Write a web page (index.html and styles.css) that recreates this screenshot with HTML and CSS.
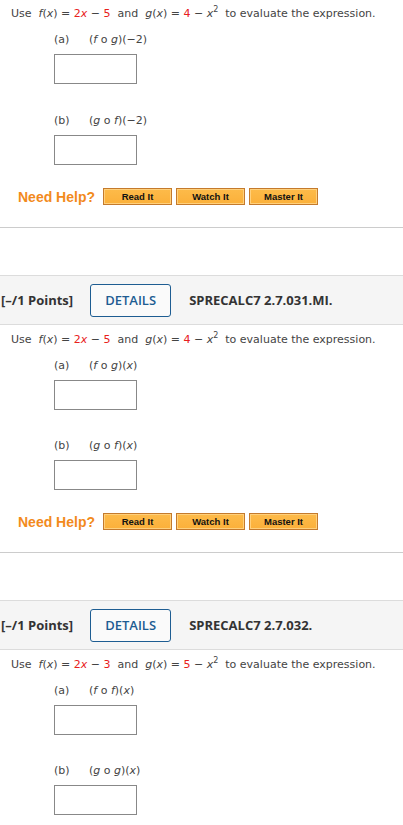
FILE: index.html
```html
<!DOCTYPE html>
<html>
<head>
<meta charset="utf-8">
<link rel="stylesheet" href="styles.css">
</head>
<body>
<div class="question">
  <div class="qbody">
    <p class="stem">Use&nbsp; <i>f</i>(<i>x</i>) = <span class="r">2</span><i class="r">x</i> − <span class="r">5</span>&nbsp; and&nbsp; <i>g</i>(<i>x</i>) = <span class="r">4</span> − <i>x</i><sup>2</sup>&nbsp; to evaluate the expression.</p>
    <div class="part">
      <div class="label"><span class="pl">(a)</span><span>(<i>f</i> o <i>g</i>)(−2)</span></div>
      <div class="box"></div>
    </div>
    <div class="part">
      <div class="label"><span class="pl">(b)</span><span>(<i>g</i> o <i>f</i>)(−2)</span></div>
      <div class="box"></div>
    </div>
    <div class="help">
      <span class="need">Need Help?</span>
      <span class="btn">Read It</span>
      <span class="btn">Watch It</span>
      <span class="btn">Master It</span>
    </div>
  </div>
</div>
<div class="sep"></div>

<div class="question">
  <div class="qhead">
    <span class="pts">[–/1 Points]</span>
    <span class="details">DETAILS</span>
    <span class="code">SPRECALC7 2.7.031.MI.</span>
  </div>
  <div class="qbody">
    <p class="stem">Use&nbsp; <i>f</i>(<i>x</i>) = <span class="r">2</span><i class="r">x</i> − <span class="r">5</span>&nbsp; and&nbsp; <i>g</i>(<i>x</i>) = <span class="r">4</span> − <i>x</i><sup>2</sup>&nbsp; to evaluate the expression.</p>
    <div class="part">
      <div class="label"><span class="pl">(a)</span><span>(<i>f</i> o <i>g</i>)(<i>x</i>)</span></div>
      <div class="box"></div>
    </div>
    <div class="part">
      <div class="label"><span class="pl">(b)</span><span>(<i>g</i> o <i>f</i>)(<i>x</i>)</span></div>
      <div class="box"></div>
    </div>
    <div class="help">
      <span class="need">Need Help?</span>
      <span class="btn">Read It</span>
      <span class="btn">Watch It</span>
      <span class="btn">Master It</span>
    </div>
  </div>
</div>
<div class="sep"></div>

<div class="question">
  <div class="qhead">
    <span class="pts">[–/1 Points]</span>
    <span class="details">DETAILS</span>
    <span class="code">SPRECALC7 2.7.032.</span>
  </div>
  <div class="qbody">
    <p class="stem">Use&nbsp; <i>f</i>(<i>x</i>) = <span class="r">2</span><i class="r">x</i> − <span class="r">3</span>&nbsp; and&nbsp; <i>g</i>(<i>x</i>) = <span class="r">5</span> − <i>x</i><sup>2</sup>&nbsp; to evaluate the expression.</p>
    <div class="part">
      <div class="label"><span class="pl">(a)</span><span>(<i>f</i> o <i>f</i>)(<i>x</i>)</span></div>
      <div class="box"></div>
    </div>
    <div class="part">
      <div class="label"><span class="pl">(b)</span><span>(<i>g</i> o <i>g</i>)(<i>x</i>)</span></div>
      <div class="box"></div>
    </div>
  </div>
</div>
</body>
</html>
```
FILE: styles.css
```css
html, body {
  margin: 0;
  padding: 0;
  background: #fff;
}
body {
  font-family: "DejaVu Sans", Verdana, sans-serif;
  font-size: 11px;
  color: #444;
  overflow: hidden;
}
.qbody {
  padding: 7px 0 0 11px;
}
.qhead + .qbody {
  padding-top: 8px;
}
.stem {
  margin: 0;
  line-height: 14px;
  white-space: nowrap;
}
.stem sup {
  font-size: 8px;
  line-height: 0;
  vertical-align: 5px;
}
.r {
  color: #e8201c;
}
i {
  font-style: italic;
}
.part {
  margin-left: 43px;
  padding-top: 12px;
}
.part + .part {
  padding-top: 30px;
}
.qhead + .qbody .part + .part {
  padding-top: 29px;
}
.label {
  display: flex;
  line-height: 14px;
  color: #444;
}
.pl {
  width: 35px;
}
.box {
  margin-top: 7px;
  width: 83px;
  height: 30px;
  box-sizing: border-box;
  border: 1px solid #888;
  background: #fff;
}
.help {
  display: flex;
  align-items: center;
  margin: 23px 0 0 7px;
  height: 17px;
}
.need {
  font-family: "Liberation Sans", Arial, sans-serif;
  font-weight: bold;
  font-size: 14px;
  color: #f28a1c;
  margin-right: 8px;
}
.btn {
  box-sizing: border-box;
  width: 69px;
  height: 17px;
  margin-right: 4px;
  display: flex;
  align-items: center;
  justify-content: center;
  font-family: "Liberation Sans", Arial, sans-serif;
  font-weight: bold;
  font-size: 9.5px;
  color: #111;
  border: 1px solid #c47a2c;
  background: linear-gradient(#fdbb4a, #fbb03a);
  box-shadow: inset 0 0 0 1px #ffd07c;
}
.sep {
  margin-top: 22px;
  height: 1px;
  background: #cccccc;
  margin-bottom: 47px;
}
.qhead {
  box-sizing: border-box;
  height: 50px;
  display: flex;
  align-items: center;
  background: #f5f5f5;
  border-top: 1px solid #dcdcdc;
  border-bottom: 1px solid #dcdcdc;
  font-family: "Open Sans", sans-serif;
  font-size: 13px;
  padding-left: 1px;
}
.pts {
  font-weight: bold;
  color: #333;
}
.details {
  box-sizing: border-box;
  margin-left: 17px;
  width: 81px;
  height: 33px;
  border: 1px solid #1e5d92;
  border-radius: 3px;
  display: flex;
  align-items: center;
  justify-content: center;
  color: #1e5d92;
  font-weight: 600;
  font-size: 13px;
  background: #fafafa;
}
.code {
  margin-left: 18px;
  font-weight: bold;
  color: #333;
}
```
